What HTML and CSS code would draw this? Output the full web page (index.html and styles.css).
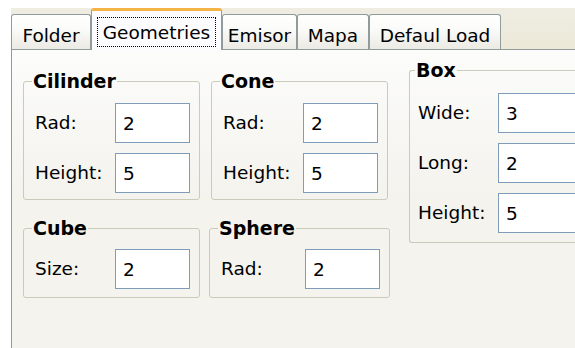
FILE: index.html
```html
<!DOCTYPE html>
<html>
<head>
<meta charset="utf-8">
<link rel="stylesheet" href="styles.css">
</head>
<body>
<div class="window">
  <div class="tabstrip">
    <div class="tab tab-folder">Folder</div>
    <div class="tab tab-active tab-geo"><span class="focus">Geometries</span></div>
    <div class="tab tab-emisor">Emisor</div>
    <div class="tab tab-mapa">Mapa</div>
    <div class="tab tab-load">Defaul Load</div>
  </div>
  <div class="page">
    <div class="groups">
      <fieldset class="group group-cil">
        <legend>Cilinder</legend>
        <div class="fields">
          <label>Rad:</label><input class="field" value="2">
          <label>Height:</label><input class="field" value="5">
        </div>
      </fieldset>
      <fieldset class="group group-cone">
        <legend>Cone</legend>
        <div class="fields">
          <label>Rad:</label><input class="field" value="2">
          <label>Height:</label><input class="field" value="5">
        </div>
      </fieldset>
      <fieldset class="group group-box">
        <legend>Box</legend>
        <div class="fields fields-wide">
          <label>Wide:</label><input class="field" value="3">
          <label>Long:</label><input class="field" value="2">
          <label>Height:</label><input class="field" value="5">
        </div>
      </fieldset>
      <fieldset class="group group-single">
        <legend>Cube</legend>
        <div class="fields">
          <label>Size:</label><input class="field" value="2">
        </div>
      </fieldset>
      <fieldset class="group group-single group-sphere">
        <legend>Sphere</legend>
        <div class="fields">
          <label>Rad:</label><input class="field field-sphere" value="2">
        </div>
      </fieldset>
    </div>
  </div>
</div>
</body>
</html>
```

FILE: styles.css
```css
html, body {
  margin: 0;
  padding: 0;
  background: #ffffff;
  width: 575px;
  height: 348px;
  overflow: hidden;
}

body {
  font-family: "DejaVu Sans", Verdana, sans-serif;
  font-size: 18.5px;
  color: #000;
}

.window {
  margin: 8px 0 0 11px;
  height: 340px;
  display: flex;
  flex-direction: column;
}

.tabstrip {
  display: flex;
  align-items: flex-end;
  height: 41px;
  background: linear-gradient(#efede2, #ece9d8);
  flex: none;
}

.tab {
  box-sizing: border-box;
  height: 35px;
  padding-top: 7px;
  border: 1px solid #919b9c;
  border-bottom: none;
  border-radius: 3px 3px 0 0;
  background: linear-gradient(#ffffff, #fbfbf9 40%, #ebeae4);
  display: flex;
  align-items: center;
  justify-content: center;
  white-space: nowrap;
  line-height: 21px;
}

.tab-folder { width: 80px; }
.tab-emisor { width: 75px; }
.tab-mapa { width: 72px; }
.tab-load { width: 132px; }

.tab-active {
  width: 131px;
  height: 42px;
  margin-bottom: -1px;
  padding-top: 6px;
  align-items: flex-start;
  border-top: 3px solid #f5b347;
  background: #fcfcfe;
  position: relative;
  z-index: 1;
}

.focus {
  display: inline-block;
  padding: 5px 6px 3px;
  line-height: 22px;
  outline: 1px dotted #000;
  outline-offset: -1px;
}

.page {
  flex: 1;
  border-top: 1px solid #919b9c;
  border-left: 1px solid #919b9c;
  background: linear-gradient(#fcfcfb, #f4f3ee 140px);
  padding: 9px 0 0 11px;
}

.groups {
  display: grid;
  grid-template-columns: 177px 177px 1fr;
  column-gap: 11px;
  row-gap: 17px;
  align-items: start;
}

.group {
  margin: 0;
  min-width: 0;
  border: 1px solid #cbcbb9;
  border-radius: 3px;
  padding: 11px 9px 6px 11px;
}

.group legend {
  font-weight: bold;
  font-size: 19px;
  line-height: 22px;
  padding: 0 1px;
  margin-left: -3px;
}

.group-cil,
.group-cone {
  margin-top: 11px;
}

.group-box {
  grid-column: 3;
  grid-row: 1 / span 2;
  margin-left: 10px;
  padding: 12px 0 9px 8px;
  border-right: none;
  border-radius: 3px 0 0 3px;
}

.group-single {
  padding-top: 10px;
  padding-bottom: 8px;
}

.group-sphere .fields {
  grid-template-columns: 84px 75px;
}

.group-sphere {
  margin-left: -2px;
  margin-right: -2px;
  padding-right: 7px;
}

.fields {
  display: grid;
  grid-template-columns: 80px 75px;
  row-gap: 10px;
  align-items: center;
}

.fields-wide {
  grid-template-columns: 80px 90px;
}

.fields label {
  white-space: nowrap;
  line-height: 22px;
}

.field {
  box-sizing: border-box;
  width: 100%;
  height: 40px;
  margin: 0;
  border: 1px solid #7f9db9;
  background: #fff;
  padding: 0 0 0 7px;
  font-family: "DejaVu Sans", Verdana, sans-serif;
  font-size: 18.5px;
  color: #000;
  outline: none;
}
```
